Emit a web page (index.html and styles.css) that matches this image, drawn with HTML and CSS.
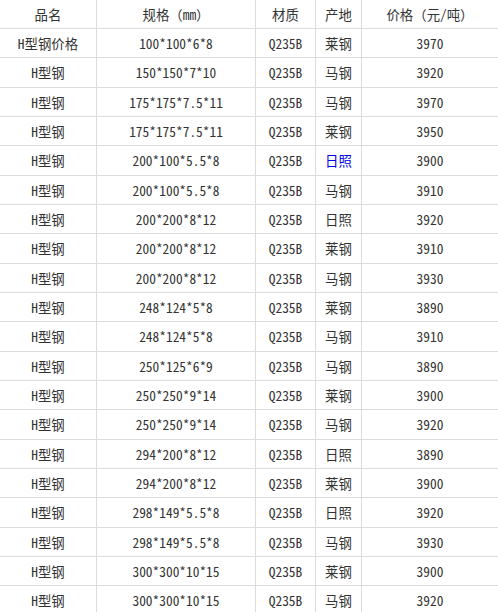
FILE: index.html
```html
<!DOCTYPE html>
<html lang="zh-CN">
<head>
<meta charset="utf-8">
<title>H型钢价格</title>
<link rel="stylesheet" href="styles.css">
</head>
<body>
<div class="wrap">
<table class="price">
<colgroup><col class="c1"><col class="c2"><col class="c3"><col class="c4"><col class="c5"></colgroup>
<thead>
<tr><th>品名</th><th>规格（mm）</th><th>材质</th><th>产地</th><th>价格（元/吨）</th></tr>
</thead>
<tbody>
<tr><td>H型钢价格</td><td>100*100*6*8</td><td>Q235B</td><td>莱钢</td><td>3970</td></tr>
<tr><td>H型钢</td><td>150*150*7*10</td><td>Q235B</td><td>马钢</td><td>3920</td></tr>
<tr><td>H型钢</td><td>175*175*7.5*11</td><td>Q235B</td><td>马钢</td><td>3970</td></tr>
<tr><td>H型钢</td><td>175*175*7.5*11</td><td>Q235B</td><td>莱钢</td><td>3950</td></tr>
<tr><td>H型钢</td><td>200*100*5.5*8</td><td>Q235B</td><td class="link">日照</td><td>3900</td></tr>
<tr><td>H型钢</td><td>200*100*5.5*8</td><td>Q235B</td><td>马钢</td><td>3910</td></tr>
<tr><td>H型钢</td><td>200*200*8*12</td><td>Q235B</td><td>日照</td><td>3920</td></tr>
<tr><td>H型钢</td><td>200*200*8*12</td><td>Q235B</td><td>莱钢</td><td>3910</td></tr>
<tr><td>H型钢</td><td>200*200*8*12</td><td>Q235B</td><td>马钢</td><td>3930</td></tr>
<tr><td>H型钢</td><td>248*124*5*8</td><td>Q235B</td><td>莱钢</td><td>3890</td></tr>
<tr><td>H型钢</td><td>248*124*5*8</td><td>Q235B</td><td>马钢</td><td>3910</td></tr>
<tr><td>H型钢</td><td>250*125*6*9</td><td>Q235B</td><td>马钢</td><td>3890</td></tr>
<tr><td>H型钢</td><td>250*250*9*14</td><td>Q235B</td><td>莱钢</td><td>3900</td></tr>
<tr><td>H型钢</td><td>250*250*9*14</td><td>Q235B</td><td>马钢</td><td>3920</td></tr>
<tr><td>H型钢</td><td>294*200*8*12</td><td>Q235B</td><td>日照</td><td>3890</td></tr>
<tr><td>H型钢</td><td>294*200*8*12</td><td>Q235B</td><td>莱钢</td><td>3900</td></tr>
<tr><td>H型钢</td><td>298*149*5.5*8</td><td>Q235B</td><td>日照</td><td>3920</td></tr>
<tr><td>H型钢</td><td>298*149*5.5*8</td><td>Q235B</td><td>马钢</td><td>3930</td></tr>
<tr><td>H型钢</td><td>300*300*10*15</td><td>Q235B</td><td>莱钢</td><td>3900</td></tr>
<tr><td>H型钢</td><td>300*300*10*15</td><td>Q235B</td><td>马钢</td><td>3920</td></tr>
</tbody>
</table>
</div>
</body>
</html>
```

FILE: styles.css
```css
html, body {
  margin: 0;
  padding: 0;
  background: #fff;
}
.wrap {
  width: 498px;
  height: 612px;
  overflow: hidden;
}
.price {
  width: 498px;
  table-layout: fixed;
  border-collapse: separate;
  border-spacing: 0;
  font-family: "Noto Sans Mono CJK SC", "Liberation Mono", "Noto Sans CJK SC", monospace;
  font-size: 13.4px;
  color: #333;
}
.c1 { width: 97px; }
.c2 { width: 159px; }
.c3 { width: 60px; }
.c4 { width: 46px; }
.c5 { width: 136px; }
.price th, .price td {
  padding: 0;
  text-align: center;
  vertical-align: middle;
  font-weight: normal;
  border-right: 1px solid #dcdcdc;
  border-bottom: 1px solid #dcdcdc;
  white-space: nowrap;
  line-height: 16px;
}
.price th:last-child, .price td:last-child {
  border-right: 0;
}
.price thead tr { height: 29px; }
.price tbody tr { height: 29.333px; }
.link { color: #0000ee; }
```
